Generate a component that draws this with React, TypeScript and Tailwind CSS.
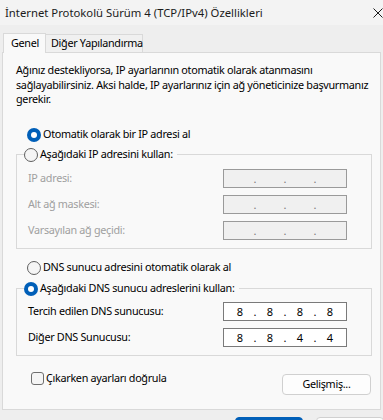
import React from 'react';

const FONT = "font-['Segoe_UI','Noto_Sans',sans-serif]";

function Radio({ checked }: { checked?: boolean }) {
    return checked ? (
        <span className="w-[14px] h-[14px] rounded-full bg-[#005fb8] flex items-center justify-center shrink-0">
            <span className="w-[6px] h-[6px] rounded-full bg-white" />
        </span>
    ) : (
        <span className="w-[14px] h-[14px] rounded-full border border-[#5f5f5f] bg-[#f5f5f5] shrink-0" />
    );
}

function IpBox({ parts, disabled }: { parts: string[]; disabled?: boolean }) {
    return (
        <div
            className={`w-[124px] h-[19px] border flex items-center pl-[9px] text-[11px] tracking-normal ${
                disabled ? 'bg-[#f0f0f0] border-[#9a9a9a] text-[#7a7a7a]' : 'bg-white border-[#7a7a7a] text-black'
            }`}
        >
            {parts.map((p, i) => (
                <React.Fragment key={i}>
                    <span className="w-[14px] text-center leading-[17px]">{p}</span>
                    {i < 3 && <span className="w-[16px] text-center leading-[17px]">.</span>}
                </React.Fragment>
            ))}
        </div>
    );
}

function Row({ label, parts, disabled }: { label: string; parts: string[]; disabled?: boolean }) {
    return (
        <div className="flex items-center justify-between h-[19px]">
            <span className={disabled ? 'text-[#a0a0a0]' : 'text-black'}>{label}</span>
            <IpBox parts={parts} disabled={disabled} />
        </div>
    );
}

export default function App() {
    const empty = ['', '', '', ''];

    return (
        <div className={`w-[383px] h-[420px] overflow-hidden bg-[#eeeeee] text-[10.8px] tracking-[-0.3px] text-black ${FONT}`}>
            {/* Title bar */}
            <div className="h-[25px] bg-[#f3f3f3] flex items-center justify-between pl-[5px]">
                <span className="text-[#1b1b1b] text-[11.3px] tracking-normal leading-none">İnternet Protokolü Sürüm 4 (TCP/IPv4) Özellikleri</span>
                <svg width="10" height="10" viewBox="0 0 10 10" className="shrink-0">
                    <path d="M0.5 0.5 L9.5 9.5 M9.5 0.5 L0.5 9.5" stroke="#1b1b1b" strokeWidth="1" />
                </svg>
            </div>

            {/* Tabs */}
            <div className="h-[27px] flex items-end pl-[3px]">
                <div className="h-[20px] w-[43px] pl-[7px] bg-[#f9f9f9] border border-b-0 border-[#d9d9d9] -mb-px relative z-10 flex items-center whitespace-nowrap">
                    Genel
                </div>
                <div className="h-[18px] w-[97px] pl-[5px] bg-[#f0f0f0] border border-l-0 border-b-0 border-[#d9d9d9] flex items-center whitespace-nowrap">
                    Diğer Yapılandırma
                </div>
            </div>

            {/* Panel */}
            <div className="mx-[2px] h-[358px] bg-[#f9f9f9] border border-[#d9d9d9] pt-[10px] pl-[13px] pr-[7px]">
                <p className="leading-[14.5px]">
                    Ağınız destekliyorsa, IP ayarlarının otomatik olarak atanmasını sağlayabilirsiniz. Aksi halde, IP ayarlarınız için ağ yöneticinize başvurmanız gerekir.
                </p>

                <div className="mt-[20px] ml-[11px] flex items-center gap-[2px] h-[16px]">
                    <Radio checked />
                    <span>Otomatik olarak bir IP adresi al</span>
                </div>

                <fieldset className="mt-[4px] w-[356px] border border-[#d9d9d9] pl-[11px] pr-[24px] pb-[8px]">
                    <legend className="ml-[-4px] pl-0 pr-[4px]">
                        <span className="flex items-center gap-[2px] h-[16px]">
                            <Radio />
                            <span>Aşağıdaki IP adresini kullan:</span>
                        </span>
                    </legend>
                    <div className="flex flex-col gap-[7px] mt-[6px]">
                        <Row label="IP adresi:" parts={empty} disabled />
                        <Row label="Alt ağ maskesi:" parts={empty} disabled />
                        <Row label="Varsayılan ağ geçidi:" parts={empty} disabled />
                    </div>
                </fieldset>

                <div className="mt-[11px] ml-[11px] flex items-center gap-[2px] h-[16px]">
                    <Radio />
                    <span>DNS sunucu adresini otomatik olarak al</span>
                </div>

                <fieldset className="mt-[5px] w-[356px] border border-[#d9d9d9] pl-[11px] pr-[24px] pb-[8px]">
                    <legend className="ml-[-4px] pl-0 pr-[4px]">
                        <span className="flex items-center gap-[2px] h-[16px]">
                            <Radio checked />
                            <span>Aşağıdaki DNS sunucu adreslerini kullan:</span>
                        </span>
                    </legend>
                    <div className="flex flex-col gap-[7px] mt-[5px]">
                        <Row label="Tercih edilen DNS sunucusu:" parts={['8', '8', '8', '8']} />
                        <Row label="Diğer DNS Sunucusu:" parts={['8', '8', '4', '4']} />
                    </div>
                </fieldset>

                <div className="mt-[15px] flex items-start justify-between pl-[15px] pr-[2px]">
                    <label className="flex items-center gap-[2px] h-[16px]">
                        <span className="w-[13px] h-[13px] rounded-[3px] border border-[#6f6f6f] bg-[#f5f5f5]" />
                        <span>Çıkarken ayarları doğrula</span>
                    </label>
                    <button className="mt-[3px] w-[89px] h-[21px] rounded-[4px] border border-[#d0d0d0] bg-[#fdfdfd] flex items-center justify-center">
                        Gelişmiş...
                    </button>
                </div>
            </div>

            {/* Footer buttons (cut off) */}
            <div className="flex justify-end gap-[13px] pt-[7px]">
                <button className="w-[68px] h-[22px] rounded-[4px] bg-[#005fb8] border border-[#005fb8]" />
                <button className="w-[68px] h-[22px] rounded-[4px] bg-[#fdfdfd] border border-[#d0d0d0] -mr-[1px]" />
            </div>
        </div>
    );
}
